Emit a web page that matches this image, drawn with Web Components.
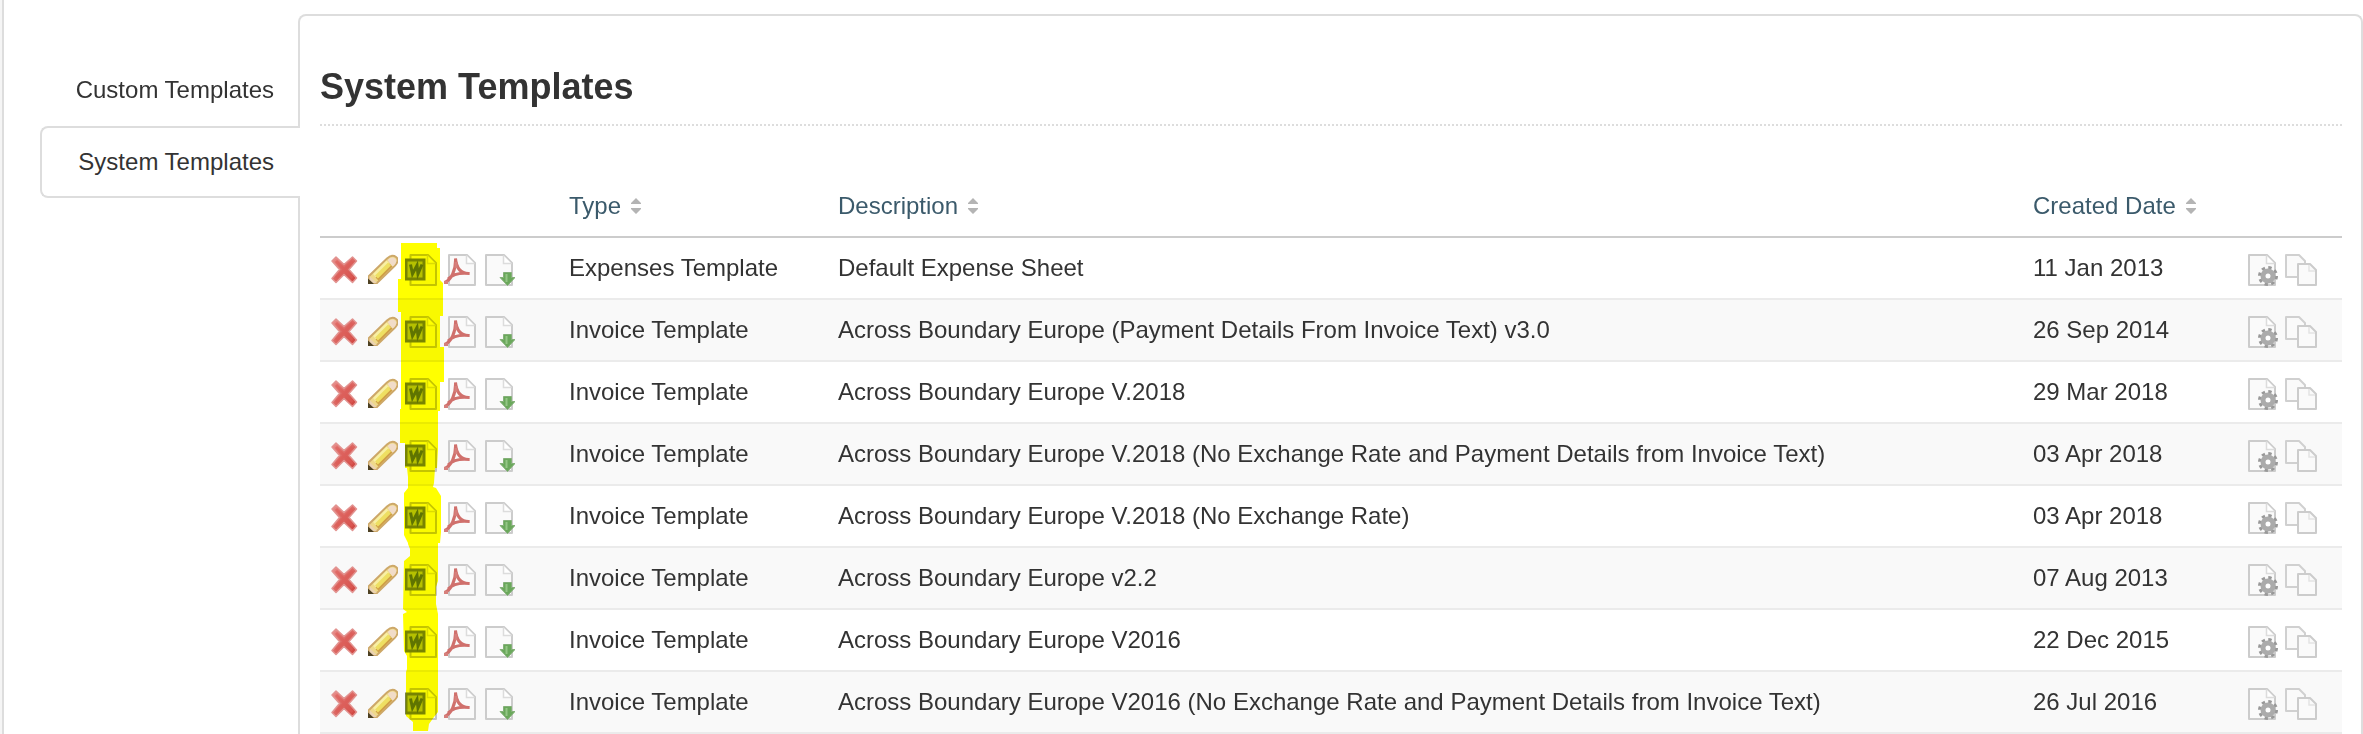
<!DOCTYPE html>
<html lang="en">
<head>
<meta charset="utf-8">
<title>System Templates</title>
<style>
    body {
        margin: 0;
        background: #f5f5f5;
        color: #333;
        font: 24px/28px "Liberation Sans", Arial, sans-serif;
    }
</style>
</head>
<body>

<settings-page>
    <side-tabs slot="tabs">
        <side-tab>Custom Templates</side-tab>
        <side-tab active>System Templates</side-tab>
    </side-tabs>
    <content-panel>
        <span slot="title">System Templates</span>
        <template-table></template-table>
    </content-panel>
</settings-page>

<script>
/**
 * small helper: every component gets an open shadow root
 * filled with its own styles and markup
 */
function render(element, html) {
    const template = document.createElement('template')
    template.innerHTML = html
    const root = element.attachShadow({ mode: 'open' })
    root.appendChild(template.content.cloneNode(true))
    return root
}

/**
 * the icons, all drawn on a 32 x 32 grid
 */
const icons = {
    remove: `
        <linearGradient id="red" x1="0" y1="0" x2="1" y2="1">
            <stop offset="0" stop-color="#ea8f8c"/><stop offset="1" stop-color="#cf3f39"/>
        </linearGradient>
        <path d="M9 3 17 10.500 25.500 3 29.500 7 22 15.500 29.500 24 25.500 28.500 17 20.500 9 28.500 5 24.500 12.500 15.500 5 7Z" fill="url(#red)" stroke="#e29390" stroke-width="1.500" stroke-linejoin="round"/>
        <path d="M9 7 25.500 24M25.500 7 9 24" stroke="#dc5a55" stroke-width="3" opacity=".6"/>`,
    edit: `
        <g transform="translate(1 0)">
        <path d="M2 29V22L20 4.500Q25 0 29 3T28 11.500L10 29Z" fill="#efd98a" stroke="#cda869" stroke-width="2"/>
        <path d="M10 25 24 11" stroke="#cf9f45" stroke-width="4"/>
        <path d="M7.500 21.500 21 8" stroke="#f8f0a4" stroke-width="4"/>
        <path d="M9.500 23 22.500 10" stroke="#eedf62" stroke-width="4"/>
        <path d="M20.500 6Q25 2 28 4.500T27 11.500L25.500 12.500Z" fill="#f1dcc8"/>
        <path d="M2.500 22 10 29H2.500Z" fill="#ebd3b2"/>
        <path d="M1 24.500 7 30H1Z" fill="#4d4022"/>
        </g>`,
    word: `
        <path d="M5.500 1H23L31 9V31H5.500Z" fill="#fafafa" stroke="#c4c4c4" stroke-width="2" stroke-linejoin="round"/>
        <path d="M22.500 1.500V9.500H30.500" fill="#fff" stroke="#dcdcdc" stroke-width="1.500"/>
        <rect x="1" y="6" width="18" height="19" fill="#b5c08c" stroke="#788440" stroke-width="3"/>
        <path d="M5.500 10.500 7.500 20 12 11.500 13 20 17 10.500" fill="none" stroke="#5f7440" stroke-width="3"/>`,
    pdf: `
        <path d="M5 1H23L31 9V31H5Z" fill="#fafafa" stroke="#ccc" stroke-width="2" stroke-linejoin="round"/>
        <path d="M22.500 1.500V9.500H30.500" fill="#fff" stroke="#dcdcdc" stroke-width="1.500"/>
        <path d="M0 28.500C7 27 12 16 11.500 4.500C12.500 14 17 20 25.500 19.500C17 18.500 9 20 4 25" fill="none" stroke="#d0706c" stroke-width="3"/>
        <path d="M12 8V14M0 28.500H4" stroke="#d67f7b" stroke-width="3"/>`,
    download: `
        <path d="M3 1H21L29 9V31H3Z" fill="#fafafa" stroke="#ccc" stroke-width="2" stroke-linejoin="round"/>
        <path d="M20.500 1.500V9.500H28.500" fill="#fff" stroke="#dcdcdc" stroke-width="1.500"/>
        <path d="M20.500 18.500H28.500V23.500H32L24.500 31.500 17 23.500H20.500Z" fill="#6aa85b" stroke="#84b078"/>
        <path d="M23.500 20V28" stroke="#94c686" stroke-width="2"/>`,
    settings: `
        <path d="M3 1H21L29 9V31H3Z" fill="#fafafa" stroke="#ccc" stroke-width="2" stroke-linejoin="round"/>
        <path d="M20.500 1.500V9.500H28.500" fill="#fff" stroke="#dcdcdc" stroke-width="1.500"/>
        <circle cx="22" cy="22" r="8.500" fill="none" stroke="#999" stroke-width="3" stroke-dasharray="3.340"/>
        <circle cx="22" cy="22" r="5" fill="#fff" stroke="#ababab" stroke-width="5"/>`,
    copy: `
        <path d="M1 1H14L20 7V23H1Z" fill="#fafafa" stroke="#d0d0d0" stroke-width="2" stroke-linejoin="round"/>
        <path d="M13 10H25L31 16V31H13Z" fill="#fafafa" stroke="#ccc" stroke-width="2" stroke-linejoin="round"/>
        <path d="M24 11V17H30" fill="none" stroke="#e4e4e4" stroke-width="1.500"/>`
}

/**
 * a clickable icon, eg. <icon-button name="edit" label="Edit">
 */
class IconButton extends HTMLElement {
    constructor() {
        super()
        render(this, `
            <style>
                :host { display: block; }
                button {
                    display: block;
                    padding: 0;
                    border: 0;
                    background: none;
                    cursor: pointer;
                }
                svg { display: block; width: 32px; height: 32px; }
            </style>
            <button type="button" aria-label="${this.getAttribute('label')}">
                <svg viewBox="0 0 32 32" fill="none">${icons[this.getAttribute('name')]}</svg>
            </button>
        `)
    }
}

/**
 * the white page with the tabs on the left and the panel beside them
 */
class SettingsPage extends HTMLElement {
    constructor() {
        super()
        render(this, `
            <style>
                :host {
                    display: flex;
                    box-sizing: border-box;
                    min-height: 100vh;
                    margin-left: 2px;
                    padding: 14px 0 0 36px;
                    border-left: 2px solid #ddd;
                    background: #fff;
                }
                nav { flex: 0 0 258px; padding-top: 40px; }
                main { flex: 1; min-width: 0; display: flex; }
            </style>
            <nav aria-label="Templates"><slot name="tabs"></slot></nav>
            <main><slot></slot></main>
        `)
    }
}

class SideTabs extends HTMLElement {
    constructor() {
        super()
        render(this, `
            <style>
                :host { display: flex; flex-direction: column; }
            </style>
            <slot></slot>
        `)
    }
}

/**
 * the active tab is 2px wider so it covers the border of the panel
 */
class SideTab extends HTMLElement {
    constructor() {
        super()
        render(this, `
            <style>
                :host { display: block; position: relative; z-index: 1; margin-right: -2px; }
                a {
                    display: block;
                    padding: 20px 26px 20px 20px;
                    border: 2px solid transparent;
                    border-right: 0;
                    border-radius: 8px 0 0 8px;
                    color: inherit;
                    text-align: right;
                    text-decoration: none;
                }
                :host([active]) a { border-color: #ddd; background: #fff; }
            </style>
            <a href="#"><slot></slot></a>
        `)
    }
}

class ContentPanel extends HTMLElement {
    constructor() {
        super()
        render(this, `
            <style>
                :host {
                    display: block;
                    flex: 1;
                    min-width: 0;
                    padding: 51px 19px 0 20px;
                    border: 2px solid #ddd;
                    border-bottom: 0;
                    border-radius: 8px 8px 0 0;
                }
                h1 {
                    margin: 0 0 50px;
                    padding-bottom: 17px;
                    border-bottom: 2px dotted #ddd;
                    font-size: 36px;
                    line-height: 40px;
                }
            </style>
            <h1><slot name="title"></slot></h1>
            <slot></slot>
        `)
    }
}

/**
 * column heading with the two sort arrows
 */
class SortButton extends HTMLElement {
    constructor() {
        super()
        render(this, `
            <style>
                :host { display: block; }
                button {
                    display: flex;
                    align-items: center;
                    gap: 10px;
                    padding: 0;
                    border: 0;
                    background: none;
                    color: #3b5a6b;
                    font: inherit;
                    cursor: pointer;
                }
                svg { width: 10px; height: 16px; fill: #b4b4b4; }
            </style>
            <button type="button">
                <slot></slot>
                <svg viewBox="0 0 10 16"><path d="M5 0 10 5V6H0V5ZM0 10H10V11L5 16 0 11Z"/></svg>
            </button>
        `)
    }
}

/**
 * marker pen strokes over the column of word icons
 */
class MarkerStroke extends HTMLElement {
    constructor() {
        super()
        render(this, `
            <style>
                :host {
                    position: absolute;
                    top: 67px;
                    left: 78px;
                    mix-blend-mode: multiply;
                    pointer-events: none;
                }
                svg { display: block; width: 48px; height: 490px; }
            </style>
            <svg viewBox="398 243 48 490" aria-hidden="true">
                <path fill="#ff0" d="M401 243H437V248H440V280L443 283V316H440V347H444V382H440V411H438V450L437 468H435L434 483 433 487 436 488 441 496V532L440 543H438V581L436 587V604L438 614V712L434 717 429 724 428 731H413V722L406 716V672L407 669V656L404 651 403 614 407 612 403 609 404 561 410 556V549L408 544V543L404 535V493L408 488V477L407 468H405V443H400V409H401V312H398V279H401Z"/>
            </svg>
        `)
    }
}

const rows = [
    ['Expenses Template', 'Default Expense Sheet', '11 Jan 2013'],
    ['Invoice Template', 'Across Boundary Europe (Payment Details From Invoice Text) v3.0', '26 Sep 2014'],
    ['Invoice Template', 'Across Boundary Europe V.2018', '29 Mar 2018'],
    ['Invoice Template', 'Across Boundary Europe V.2018 (No Exchange Rate and Payment Details from Invoice Text)', '03 Apr 2018'],
    ['Invoice Template', 'Across Boundary Europe V.2018 (No Exchange Rate)', '03 Apr 2018'],
    ['Invoice Template', 'Across Boundary Europe v2.2', '07 Aug 2013'],
    ['Invoice Template', 'Across Boundary Europe V2016', '22 Dec 2015'],
    ['Invoice Template', 'Across Boundary Europe V2016 (No Exchange Rate and Payment Details from Invoice Text)', '26 Jul 2016']
]

class TemplateTable extends HTMLElement {
    constructor() {
        super()
        render(this, `
            <style>
                :host { display: block; position: relative; }
                table {
                    width: 100%;
                    table-layout: fixed;
                    border-spacing: 0;
                }
                th, td {
                    box-sizing: border-box;
                    height: 62px;
                    padding: 0 7px;
                    border-bottom: 2px solid #ebebeb;
                    text-align: left;
                    font-weight: normal;
                    white-space: nowrap;
                }
                th { border-color: #ccc; }
                tbody tr:nth-child(even) { background: #f9f9f9; }
                .actions { width: 242px; }
                .type { width: 269px; }
                .date { width: 213px; }
                .more { width: 103px; }
                .icons { display: flex; gap: 7px; padding-top: 4px; }
            </style>
            <table>
                <thead>
                    <tr>
                        <th class="actions"></th>
                        <th class="type"><sort-button>Type</sort-button></th>
                        <th><sort-button>Description</sort-button></th>
                        <th class="date"><sort-button>Created Date</sort-button></th>
                        <th class="more"></th>
                    </tr>
                </thead>
                <tbody>
                    ${rows.map(([type, description, created]) => `
                        <tr>
                            <td><div class="icons">
                                <icon-button name="remove" label="Delete"></icon-button>
                                <icon-button name="edit" label="Edit"></icon-button>
                                <icon-button name="word" label="Word"></icon-button>
                                <icon-button name="pdf" label="PDF"></icon-button>
                                <icon-button name="download" label="Download"></icon-button>
                            </div></td>
                            <td>${type}</td>
                            <td>${description}</td>
                            <td>${created}</td>
                            <td><div class="icons">
                                <icon-button name="settings" label="Settings"></icon-button>
                                <icon-button name="copy" label="Copy"></icon-button>
                            </div></td>
                        </tr>`).join('')}
                </tbody>
            </table>
            <marker-stroke></marker-stroke>
        `)
    }
}

window.customElements.define('icon-button', IconButton)
window.customElements.define('sort-button', SortButton)
window.customElements.define('marker-stroke', MarkerStroke)
window.customElements.define('template-table', TemplateTable)
window.customElements.define('side-tab', SideTab)
window.customElements.define('side-tabs', SideTabs)
window.customElements.define('content-panel', ContentPanel)
window.customElements.define('settings-page', SettingsPage)
</script>
</body>
</html>
